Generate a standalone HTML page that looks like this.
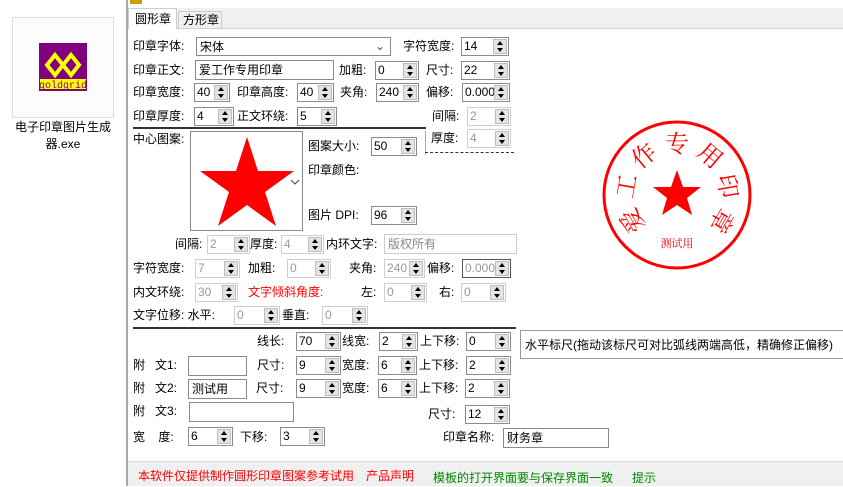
<!DOCTYPE html>
<html><head><meta charset="utf-8"><style>
*{margin:0;padding:0;box-sizing:border-box}
body{width:843px;height:486px;overflow:hidden;background:#fff;font:12px "Liberation Sans","Noto Sans CJK SC",sans-serif;color:#000;position:relative}
.a{position:absolute;white-space:nowrap;line-height:18px}
.g{color:#888}
.sp{position:absolute;height:19px;border:1px solid #8a8a8a;background:#fff}
.sp.d{border-color:#cfcfcf}
.sp.d span{color:#999}
.sp span{position:absolute;left:2px;top:1px;line-height:15px;font-family:"Liberation Sans","Noto Sans CJK SC",sans-serif;font-size:12px}
.sp i{position:absolute;right:1px;top:1px;width:14px;height:15px;background:#e4e4e4;border:1px solid #bdbdbd}
.sp i:before{content:"";position:absolute;left:3px;top:1px;border:3.5px solid transparent;border-bottom:4px solid #000;border-top:0}
.sp i:after{content:"";position:absolute;left:3px;top:8px;border:3.5px solid transparent;border-top:4px solid #000;border-bottom:0}
.tx{position:absolute;height:20px;border:1px solid #8a8a8a;background:#fff;padding:1px 3px;line-height:16px}
.red{color:#f00}.grn{color:#080}
</style></head><body>
<div style="position:absolute;left:0;top:0;width:126px;height:486px;background:#fff"></div>
<div style="position:absolute;left:12px;top:17px;width:102px;height:101px;border:1px solid #ddd;background:#fcfcfc"></div>
<div style="position:absolute;left:39px;top:43px;width:48px;height:48px;background:#800080"></div>
<svg style="position:absolute;left:39px;top:43px" width="48" height="48"><g fill="none" stroke="#ff0" stroke-width="4"><path d="M8 22 L16 12 L24 22 L16 32 Z"/><path d="M24 22 L32 12 L40 22 L32 32 Z"/></g><rect x="1" y="36" width="46" height="10" fill="#ff0"/><text x="24" y="45" font-size="10" text-anchor="middle" fill="#800080" font-family="Liberation Mono">goldgrid</text></svg>
<div class="a" style="left:0;width:126px;text-align:center;top:118px;font-size:12px">电子印章图片生成</div>
<div class="a" style="left:0;width:126px;text-align:center;top:135px;font-size:12px">器.exe</div>
<div style="position:absolute;left:126px;top:0;width:2px;height:486px;background:#a8a8a8"></div>
<div style="position:absolute;left:128px;top:0;width:715px;height:9px;background:#fff"></div>
<div style="position:absolute;left:130px;top:0;width:12px;height:4px;background:#c8a000"></div>
<div style="position:absolute;left:128px;top:8px;width:715px;height:21px;background:#f0f0f0;border-bottom:1px solid #d0d0d0"></div>
<div class="a" style="left:128px;top:8px;width:49px;height:21px;background:#fff;border:1px solid #ccc;border-bottom:0;padding-left:6px;line-height:20px">圆形章</div>
<div class="a" style="left:178px;top:11px;width:44px;height:18px;border:1px solid #ccc;border-bottom:0;padding-left:4px;line-height:17px">方形章</div>

<div class="a" style="left:133px;top:37px">印章字体:</div>
<div class="tx" style="left:196px;top:37px;width:195px;height:19px">宋体<span style="position:absolute;right:5px;top:0;color:#555">&#8964;</span></div>
<div class="a" style="left:403px;top:37px">字符宽度:</div>
<div class="sp" style="left:461px;top:37px;width:48px"><span>14</span><i></i></div>

<div class="a" style="left:133px;top:61px">印章正文:</div>
<div class="tx" style="left:195px;top:60px;width:139px">爱工作专用印章</div>
<div class="a" style="left:339px;top:61px">加粗:</div>
<div class="sp" style="left:375px;top:61px;width:44px"><span>0</span><i></i></div>
<div class="a" style="left:426px;top:61px">尺寸:</div>
<div class="sp" style="left:461px;top:61px;width:49px"><span>22</span><i></i></div>

<div class="a" style="left:133px;top:83px">印章宽度:</div>
<div class="sp" style="left:194px;top:83px;width:36px"><span>40</span><i></i></div>
<div class="a" style="left:237px;top:83px">印章高度:</div>
<div class="sp" style="left:297px;top:83px;width:37px"><span>40</span><i></i></div>
<div class="a" style="left:340px;top:83px">夹角:</div>
<div class="sp" style="left:376px;top:83px;width:43px"><span>240</span><i></i></div>
<div class="a" style="left:426px;top:83px">偏移:</div>
<div class="sp" style="left:462px;top:83px;width:48px"><span>0.000</span><i></i></div>

<div class="a" style="left:133px;top:107px">印章厚度:</div>
<div class="sp" style="left:194px;top:107px;width:40px"><span>4</span><i></i></div>
<div class="a" style="left:237px;top:107px">正文环绕:</div>
<div class="sp" style="left:297px;top:107px;width:40px"><span>5</span><i></i></div>
<div class="a" style="left:432px;top:107px">间隔:</div>
<div class="sp d" style="left:467px;top:107px;width:44px"><span>2</span><i></i></div>
<div style="position:absolute;left:133px;top:127px;width:293px;height:2px;background:#333"></div>

<div class="a" style="left:133px;top:130px">中心图案:</div>
<div style="position:absolute;left:190px;top:131px;width:113px;height:100px;border:1px solid #888;background:#fff"></div>
<svg style="position:absolute;left:190px;top:131px" width="113" height="100"><polygon fill="#f00" points="57,6 68,40 104,40 75,61 86,95 57,74 28,95 39,61 10,40 46,40"/><path d="M101 49 l4 4 l4 -4" fill="none" stroke="#444"/></svg>
<div class="a" style="left:308px;top:137px">图案大小:</div>
<div class="sp" style="left:371px;top:137px;width:46px"><span>50</span><i></i></div>
<div style="position:absolute;left:425px;top:131px;width:1px;height:24px;background:#aaa"></div>
<div class="a" style="left:431px;top:129px">厚度:</div>
<div class="sp d" style="left:467px;top:129px;width:44px"><span>4</span><i></i></div>
<div style="position:absolute;left:425px;top:152px;width:89px;border-top:1px dashed #333"></div>
<div class="a" style="left:308px;top:161px">印章颜色:</div>
<div class="a" style="left:308px;top:206px">图片 DPI:</div>
<div class="sp" style="left:371px;top:206px;width:46px"><span>96</span><i></i></div>

<div class="a" style="left:175px;top:235px">间隔:</div>
<div class="sp d" style="left:207px;top:235px;width:43px"><span>2</span><i></i></div>
<div class="a" style="left:250px;top:235px">厚度:</div>
<div class="sp d" style="left:281px;top:235px;width:43px"><span>4</span><i></i></div>
<div class="a" style="left:326px;top:235px">内环文字:</div>
<div class="tx g" style="left:384px;top:234px;width:133px;border-color:#ccc">版权所有</div>

<div class="a" style="left:133px;top:259px">字符宽度:</div>
<div class="sp d" style="left:195px;top:259px;width:45px"><span>7</span><i></i></div>
<div class="a" style="left:248px;top:259px">加粗:</div>
<div class="sp d" style="left:287px;top:259px;width:44px"><span>0</span><i></i></div>
<div class="a" style="left:349px;top:259px">夹角:</div>
<div class="sp d" style="left:384px;top:259px;width:41px"><span>240</span><i></i></div>
<div class="a" style="left:427px;top:259px">偏移:</div>
<div class="sp" style="left:462px;top:259px;width:49px;border-color:#555"><span style="color:#999">0.000</span><i></i></div>

<div class="a" style="left:133px;top:283px">内文环绕:</div>
<div class="sp d" style="left:195px;top:283px;width:43px"><span>30</span><i></i></div>
<div class="a red" style="left:248px;top:283px">文字倾斜角度:</div>
<div class="a" style="left:361px;top:283px">左:</div>
<div class="sp d" style="left:384px;top:283px;width:43px"><span>0</span><i></i></div>
<div class="a" style="left:439px;top:283px">右:</div>
<div class="sp d" style="left:461px;top:283px;width:45px"><span>0</span><i></i></div>

<div class="a" style="left:133px;top:306px">文字位移: 水平:</div>
<div class="sp d" style="left:234px;top:306px;width:46px"><span>0</span><i></i></div>
<div class="a" style="left:282px;top:306px">垂直:</div>
<div class="sp d" style="left:322px;top:306px;width:46px"><span>0</span><i></i></div>
<div style="position:absolute;left:133px;top:327px;width:383px;height:2px;background:#333"></div>

<div class="a" style="left:257px;top:332px">线长:</div>
<div class="sp" style="left:296px;top:332px;width:45px"><span>70</span><i></i></div>
<div class="a" style="left:342px;top:332px">线宽:</div>
<div class="sp" style="left:379px;top:332px;width:39px"><span>2</span><i></i></div>
<div class="a" style="left:420px;top:332px">上下移:</div>
<div class="sp" style="left:466px;top:332px;width:45px"><span>0</span><i></i></div>
<div class="a" style="left:520px;top:330px;width:323px;height:29px;border:1px solid #999;border-right:0;background:#fff;padding:5px 0 0 4px;line-height:18px">水平标尺(拖动该标尺可对比弧线两端高低，精确修正偏移)</div>

<div class="a" style="left:133px;top:356px">附&nbsp;&nbsp;&nbsp;文1:</div>
<div class="tx" style="left:188px;top:356px;width:59px"></div>
<div class="a" style="left:257px;top:356px">尺寸:</div>
<div class="sp" style="left:296px;top:356px;width:45px"><span>9</span><i></i></div>
<div class="a" style="left:342px;top:356px">宽度:</div>
<div class="sp" style="left:378px;top:356px;width:39px"><span>6</span><i></i></div>
<div class="a" style="left:419px;top:356px">上下移:</div>
<div class="sp" style="left:466px;top:356px;width:45px"><span>2</span><i></i></div>

<div class="a" style="left:133px;top:379px">附&nbsp;&nbsp;&nbsp;文2:</div>
<div class="tx" style="left:188px;top:379px;width:59px">测试用</div>
<div class="a" style="left:256px;top:379px">尺寸:</div>
<div class="sp" style="left:296px;top:379px;width:45px"><span>9</span><i></i></div>
<div class="a" style="left:342px;top:379px">宽度:</div>
<div class="sp" style="left:378px;top:379px;width:39px"><span>6</span><i></i></div>
<div class="a" style="left:419px;top:379px">上下移:</div>
<div class="sp" style="left:465px;top:379px;width:45px"><span>2</span><i></i></div>

<div class="a" style="left:133px;top:402px">附&nbsp;&nbsp;&nbsp;文3:</div>
<div class="tx" style="left:189px;top:402px;width:105px"></div>
<div class="a" style="left:428px;top:405px">尺寸:</div>
<div class="sp" style="left:465px;top:405px;width:45px"><span>12</span><i></i></div>

<div class="a" style="left:133px;top:428px">宽&nbsp;&nbsp;&nbsp;&nbsp;度:</div>
<div class="sp" style="left:188px;top:427px;width:45px"><span>6</span><i></i></div>
<div class="a" style="left:240px;top:428px">下移:</div>
<div class="sp" style="left:280px;top:427px;width:45px"><span>3</span><i></i></div>
<div class="a" style="left:443px;top:428px">印章名称:</div>
<div class="tx" style="left:503px;top:428px;width:106px">财务章</div>

<div style="position:absolute;left:128px;top:461px;width:715px;height:25px;background:#f0f0f0;border-top:1px solid #ddd"></div>
<div class="a red" style="left:138px;top:467px">本软件仅提供制作圆形印章图案参考试用</div>
<div class="a red" style="left:366px;top:467px">产品声明</div>
<div class="a grn" style="left:433px;top:469px">模板的打开界面要与保存界面一致</div>
<div class="a grn" style="left:632px;top:469px">提示</div>

<svg style="position:absolute;left:590px;top:110px" width="175" height="175" font-family="Liberation Serif,Noto Serif CJK SC,serif">
<g transform="translate(87,85)" fill="#f00">
<circle r="73" fill="none" stroke="#f00" stroke-width="3"/>
<polygon points="0,-25 6,-8 24,-8 10,3 15,20 0,10 -15,20 -10,3 -24,-8 -6,-8"/>
<g font-size="24" text-anchor="middle">
<text transform="rotate(-120) translate(0,-43)">爱</text>
<text transform="rotate(-80) translate(0,-43)">工</text>
<text transform="rotate(-40) translate(0,-43)">作</text>
<text transform="rotate(0) translate(0,-43)">专</text>
<text transform="rotate(40) translate(0,-43)">用</text>
<text transform="rotate(80) translate(0,-43)">印</text>
<text transform="rotate(120) translate(0,-43)">章</text>
</g>
<text y="52" font-size="11" text-anchor="middle">测试用</text>
</g></svg>
</body></html>
